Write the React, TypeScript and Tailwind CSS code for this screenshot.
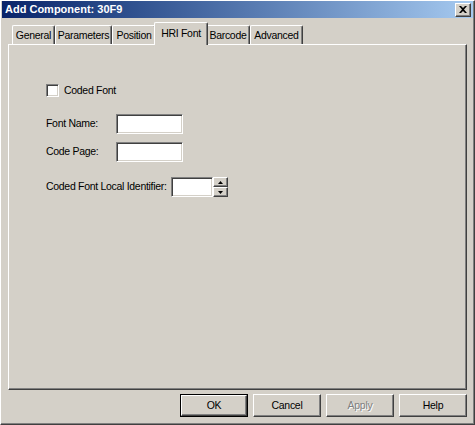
const font = { fontFamily: '"Liberation Sans", Arial, sans-serif' };

function Raised({ className = "", children }: { className?: string; children?: React.ReactNode }) {
    return (
        <div className={`border border-t-white border-l-white border-r-[#404040] border-b-[#404040] shadow-[inset_-1px_-1px_#808080] bg-[#d4d0c8] ${className}`}>
            {children}
        </div>
    );
}

function Sunken({ className = "" }: { className?: string }) {
    return (
        <div className={`border border-t-[#808080] border-l-[#808080] border-r-white border-b-white shadow-[inset_1px_1px_#404040,inset_-1px_-1px_#d4d0c8] bg-white ${className}`} />
    );
}

const tabs = [
    { label: "General", w: "w-[43px]" },
    { label: "Parameters", w: "w-[57px]" },
    { label: "Position", w: "w-[44px]" },
    { label: "HRI Font", w: "w-[54px]", active: true },
    { label: "Barcode", w: "w-[44px]" },
    { label: "Advanced", w: "w-[53px]" },
];

function Tab({ label, w, active }: { label: string; w: string; active?: boolean }) {
    if (active) {
        return (
            <div className={`${w} relative z-10 h-[23px] -mx-[2px] -mb-px flex justify-center items-start pt-[3px] bg-[#d4d0c8] border-l border-t border-l-white border-t-white border-r border-r-[#404040] shadow-[inset_-1px_0_#808080] rounded-tl-[2px] rounded-tr-[2px]`}>
                {label}
            </div>
        );
    }
    return (
        <div className={`${w} h-[19px] flex justify-center items-start pt-[2px] bg-[#d4d0c8] border-l border-t border-l-white border-t-white border-r border-r-[#404040] shadow-[inset_-1px_0_#808080] rounded-tl-[2px] rounded-tr-[2px]`}>
            {label}
        </div>
    );
}

function Button({ label, bold, disabled }: { label: string; bold?: boolean; disabled?: boolean }) {
    return (
        <div className={`w-[68px] h-[23px] ${bold ? "border border-black" : ""}`}>
            <Raised className="w-full h-full flex items-center justify-center">
                <span className={disabled ? "text-[#808080] [text-shadow:1px_1px_#ffffff]" : "text-black"}>{label}</span>
            </Raised>
        </div>
    );
}

export default function App() {
    return (
        <div style={font} className="w-[475px] h-[425px] bg-[#d4d0c8] text-[10.5px] tracking-[-0.3px] text-black border border-t-white border-l-white border-r-[#404040] border-b-[#404040] shadow-[inset_-1px_-1px_#808080] overflow-hidden flex flex-col">
            <div className="h-[17px] mx-px flex items-center justify-between bg-gradient-to-r from-[#0a246a] to-[#a6caf0] pl-[3px] pr-[2px]">
                <span className="text-white font-bold text-[11px] tracking-normal">Add Component: 30F9</span>
                <Raised className="w-[16px] h-[14px] flex items-center justify-center">
                    <svg width="8" height="7" viewBox="0 0 8 7">
                        <path d="M0 0h2l2 2 2-2h2L5 3.5 8 7H6L4 5 2 7H0l3-3.5z" fill="black" />
                    </svg>
                </Raised>
            </div>

            <div className="flex flex-col px-[7px] pt-[4px]">
                <div className="flex items-end h-[22px] pl-[4px]">
                    {tabs.map((t) => (
                        <Tab key={t.label} label={t.label} w={t.w} active={t.active} />
                    ))}
                </div>

                <Raised className="h-[346px] w-[459px] pl-[37px] pt-[39px]">
                    <div className="flex items-center gap-[5px] h-[13px]">
                        <Sunken className="w-[13px] h-[13px]" />
                        <span>Coded Font</span>
                    </div>

                    <div className="flex items-center mt-[17px] h-[20px]">
                        <span className="w-[70px]">Font Name:</span>
                        <Sunken className="w-[67px] h-[20px]" />
                    </div>
                    <div className="flex items-center mt-[8px] h-[20px]">
                        <span className="w-[70px]">Code Page:</span>
                        <Sunken className="w-[67px] h-[20px]" />
                    </div>

                    <div className="flex items-center mt-[15px] h-[20px]">
                        <span className="w-[125px] whitespace-nowrap">Coded Font Local Identifier:</span>
                        <Sunken className="w-[42px] h-[20px]" />
                        <div className="flex flex-col">
                            <Raised className="w-[15px] h-[10px] flex items-center justify-center">
                                <svg width="5" height="3" viewBox="0 0 5 3"><path d="M2.5 0L5 3H0z" fill="black" /></svg>
                            </Raised>
                            <Raised className="w-[15px] h-[10px] flex items-center justify-center">
                                <svg width="5" height="3" viewBox="0 0 5 3"><path d="M0 0h5L2.5 3z" fill="black" /></svg>
                            </Raised>
                        </div>
                    </div>
                </Raised>

                <div className="flex justify-end gap-[5px] mt-[4px]">
                    <Button label="OK" bold />
                    <Button label="Cancel" />
                    <Button label="Apply" disabled />
                    <Button label="Help" />
                </div>
            </div>
        </div>
    );
}
